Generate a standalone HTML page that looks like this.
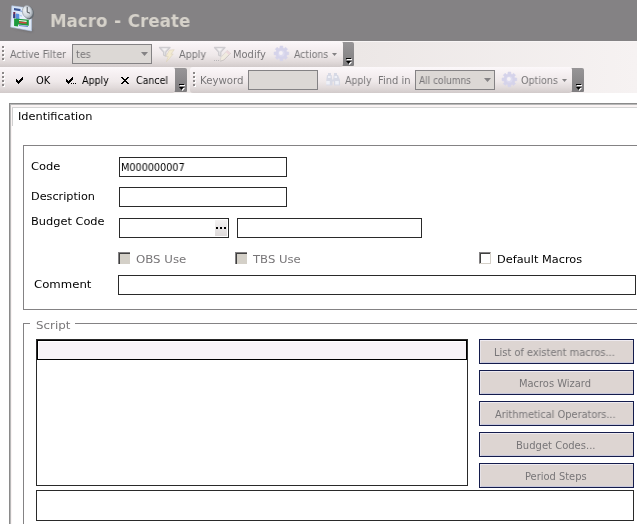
<!DOCTYPE html>
<html><head><meta charset="utf-8">
<style>
html,body{margin:0;padding:0;}
body{width:637px;height:524px;overflow:hidden;background:#fff;position:relative;font-family:"DejaVu Sans","Liberation Sans",sans-serif;font-size:11px;color:#000;}
.abs{position:absolute;}
#hdr{left:0;top:0;width:637px;height:41px;background:#848284;}
.dock{left:0;width:637px;height:26px;background:linear-gradient(to right,#ece7e6 0,#ece7e6 56%,#f6f2f2 100%);}
.tbg{background:linear-gradient(#fcf8fa 0,#f6f0f2 25%,#efe9ea 55%,#e1dada 80%,#d1caca 100%);height:26px;border-radius:0 3px 3px 0;}
.hnd{width:13px;height:24px;border-radius:0 2px 1px 0;background:linear-gradient(#979597,#8b898b 50%,#7f7d7f);}
.inp{border:1px solid #2a2a2a;background:#fff;box-sizing:border-box;}
.cmb{border:1px solid #848284;background:#dcd8d5;box-sizing:border-box;height:20px;}
.btn{border:1px solid #141c4c;background:#ddd5d2;box-shadow:inset 0 1px 0 #eeeaf0,inset 1px 0 0 #e6e2e6,inset 0 -1px 0 #c8c8dc;box-sizing:border-box;left:479px;width:155px;height:25px;}
.grip{width:3px;height:15px;}
.grip i{position:absolute;left:0;width:2px;height:2px;background:#8c8888;box-shadow:1px 1px 0 #fff;}
.chk{width:12px;height:12px;box-sizing:border-box;border-top:1px solid #848284;border-left:1px solid #848284;background:#d4d0c8;}
.chk:after{content:"";position:absolute;left:0;top:0;width:11px;height:11px;box-sizing:border-box;border-top:1px solid #404040;border-left:1px solid #404040;}
.chkw{background:#fff;border-right:1px solid #d4d0c8;border-bottom:1px solid #d4d0c8;}
.chkw:after{width:10px;height:10px;}

.t{position:absolute;will-change:transform;white-space:nowrap;line-height:14px;font-size:11px;transform-origin:0 0;}
.tt{font-family:"DejaVu Sans Condensed","Liberation Sans",sans-serif;}
.lbl{font-family:"DejaVu Sans","Liberation Sans",sans-serif;}
.ttl{font-family:"DejaVu Sans","Liberation Sans",sans-serif;font-weight:bold;font-size:17.7px;line-height:22px;word-spacing:1px;}

</style></head><body>
<div id="hdr" class="abs"></div>

<!-- header icon -->
<svg class="abs" style="left:0;top:0" width="48" height="41" viewBox="0 0 48 41">
  <defs>
    <filter id="bl" x="-20%" y="-20%" width="140%" height="140%"><feGaussianBlur stdDeviation=".5"/></filter>
    <filter id="bl2" x="-30%" y="-30%" width="160%" height="160%"><feGaussianBlur stdDeviation=".9"/></filter>
    <linearGradient id="pg" x1="0" y1="0" x2="1" y2="1"><stop offset="0" stop-color="#cfe0f6"/><stop offset=".55" stop-color="#eaf1fb"/><stop offset="1" stop-color="#d6e2f4"/></linearGradient>
    <radialGradient id="ck" cx=".38" cy=".35" r=".75"><stop offset="0" stop-color="#f2f5f8"/><stop offset=".6" stop-color="#cfd5dc"/><stop offset="1" stop-color="#9aa2aa"/></radialGradient>
  </defs>
  <path d="M13 28.500l18.500 3.500 2-2-2.500-1z" fill="#5a585c" opacity=".6" filter="url(#bl2)"/>
  <g filter="url(#bl)">
    <path d="M11.800 5.800l13 1.800 6.700 6v17.400l-20.800-3.900z" fill="url(#pg)" stroke="#b4c6e2" stroke-width=".6"/>
    <path d="M14 8l6.500.900v2.300l-6.500-.900z" fill="#3a5796"/>
    <path d="M20.500 10.500l2.500.400v1.200l-2.500-.400z" fill="#7fa4dc"/>
    <path d="M13.300 12h2v6h-2z" fill="#6e2c50"/>
    <path d="M13.300 14.200h2v4h-2z" fill="#2c4490"/>
    <path d="M16 13.500l3.200.400.200 5h-3.400z" fill="#5a90e0"/>
    <path d="M19.300 15l2.700.400v1l-2.700-.400z" fill="#a8c6f0"/>
    <path d="M14.100 18.400l4 .400 10.700 1v6l-10.700-1.200v2l-4-.600z" fill="#1e9a3c"/>
    <path d="M19 19.900l7.600.800v1.200l-7.600-.800z" fill="#f6f6f6"/>
    <path d="M19 21.500l7.600.800v1.500l-7.600-.800z" fill="#d4463e"/>
    <path d="M19 25l9 1.100v1l-9-1.100z" fill="#6a86d0"/>
  </g>
  <g filter="url(#bl)">
    <ellipse cx="28.700" cy="12.700" rx="5.200" ry="6.800" fill="#666c72" transform="rotate(-14 28.700 12.700)"/>
    <ellipse cx="27.300" cy="11.800" rx="4.900" ry="6.200" fill="url(#ck)" stroke="#a4acb4" stroke-width=".8" transform="rotate(-14 27.300 11.800)"/>
    <path d="M27.200 6.800v5.400l2.800 1" fill="none" stroke="#40464c" stroke-width=".9"/>
  </g>
</svg>

<!-- toolbar row 1 -->
<div class="abs dock" style="top:41px;border-top:1px solid #f8f5f5;box-sizing:border-box"></div>
<div class="abs hnd" style="left:341px;top:42px"></div>
<div class="abs tbg" style="left:0;top:41px;width:343px"></div>
<div class="abs grip" style="left:2px;top:46px"><i style="top:0"></i><i style="top:4px"></i><i style="top:8px"></i><i style="top:12px"></i></div>
<div class="abs cmb" style="left:72px;top:44px;width:80px"></div>

<!-- toolbar row 2 -->
<div class="abs dock" style="top:67px"></div>
<div class="abs hnd" style="left:174px;top:68px"></div>
<div class="abs tbg" style="left:0;top:67px;width:175px"></div>
<div class="abs hnd" style="left:571px;top:68px"></div>
<div class="abs tbg" style="left:190px;top:67px;width:382px;border-radius:3px"></div>
<div class="abs grip" style="left:2px;top:72px"><i style="top:0"></i><i style="top:4px"></i><i style="top:8px"></i><i style="top:12px"></i></div>
<div class="abs grip" style="left:193px;top:72px"><i style="top:0"></i><i style="top:4px"></i><i style="top:8px"></i><i style="top:12px"></i></div>
<div class="abs cmb" style="left:248px;top:70px;width:70px"></div>
<div class="abs cmb" style="left:415px;top:70px;width:80px"></div>

<!-- icons layer -->
<svg class="abs" style="left:0;top:0" width="637" height="94" viewBox="0 0 637 94">
  <!-- toolbar icons -->
  <g opacity=".9">
  <path d="M159.5 47.5h10.500l-4.200 4.600v4l-2.200-1v-3z" fill="#e6e4e6" stroke="#cbc9cd" stroke-width="1.300" stroke-linejoin="round"/><path d="M162.2 48.4h5l-2.500 2.600z" fill="#f6f4f5"/>
  <path d="M169.300 50.200l4.900-.500-3.300 4.500 2.300-.200-6.900 8 2-5.700-2.400.300z" fill="#f4ebcf" stroke="#ddd3bb" stroke-width=".7" stroke-linejoin="round"/>
  <path d="M214.5 47.5h10.500l-4.200 4.600v4l-2.200-1v-3z" fill="#e6e4e6" stroke="#cbc9cd" stroke-width="1.300" stroke-linejoin="round"/><path d="M217.2 48.4h5l-2.500 2.600z" fill="#f6f4f5"/>
  <path d="M227.200 50.400l3.400 2.900-6.800 6.800-3.700 1.100.800-3.900z" fill="#f1ecdf" stroke="#d6cecc" stroke-width=".7" stroke-linejoin="round"/>
  <path d="M230.600 53.300l-6.800 6.800-3.700 1.100" fill="none" stroke="#c4bebe" stroke-width=".8"/>
  <path d="M227.200 50.400l3.400 2.900-1.600 1.600-3.400-2.900z" fill="#ecd6da"/>
  <path d="M214 60h1v1h-1zM216 60h1v1h-1zM218 60h1v1h-1z" fill="#b4b2b4"/>
  </g>
  <path d="M279.90 47.90L279.99 46.03L282.81 46.03L282.90 47.90L284.22 48.45L285.62 47.20L287.60 49.18L286.35 50.58L286.90 51.90L288.77 51.99L288.77 54.81L286.90 54.90L286.35 56.22L287.60 57.62L285.62 59.60L284.22 58.35L282.90 58.90L282.81 60.77L279.99 60.77L279.90 58.90L278.58 58.35L277.18 59.60L275.20 57.62L276.45 56.22L275.90 54.90L274.03 54.81L274.03 51.99L275.90 51.90L276.45 50.58L275.20 49.18L277.18 47.20L278.58 48.45z" fill="#d5d3ea" stroke="#d5d3ea" stroke-width=".5" stroke-linejoin="round"/><circle cx="281.4" cy="53.4" r="3.200" fill="#dddbef"/><circle cx="280.9" cy="53.0" r="1.9" fill="#f5f1f5"/>
  <path d="M507.90 73.90L507.99 72.03L510.81 72.03L510.90 73.90L512.22 74.45L513.62 73.20L515.60 75.18L514.35 76.58L514.90 77.90L516.77 77.99L516.77 80.81L514.90 80.90L514.35 82.22L515.60 83.62L513.62 85.60L512.22 84.35L510.90 84.90L510.81 86.77L507.99 86.77L507.90 84.90L506.58 84.35L505.18 85.60L503.20 83.62L504.45 82.22L503.90 80.90L502.03 80.81L502.03 77.99L503.90 77.90L504.45 76.58L503.20 75.18L505.18 73.20L506.58 74.45z" fill="#d5d3ea" stroke="#d5d3ea" stroke-width=".5" stroke-linejoin="round"/><circle cx="509.4" cy="79.4" r="3.200" fill="#dddbef"/><circle cx="508.9" cy="79.0" r="1.9" fill="#f5f1f5"/>
  <g fill="#d7d9e5"><path d="M328 73h3v2h-3zM334 73h3v2h-3zM327 75h4.600l.600 4.500h1l.600-4.500h4.200l2 5v5.500h-6v-4h-1.500v4h-6.200v-5.500z"/></g>
  <path d="M326.200 81h3.600v3.600h-3.600zM335.200 81h3.600v3.600h-3.600zM328 76h2.500v2h-2.500zM334.500 76h2.500v2h-2.500z" fill="#eef0f7"/>
  <!-- combo arrows -->
  <path d="M141 52h7l-3.500 4z" fill="#848284"/>
  <path d="M484 78h7l-3.500 4z" fill="#848284"/>
  <path d="M332 53h5l-2.500 3z" fill="#848284"/>
  <path d="M562 79h5l-2.500 3z" fill="#848284"/>
  <!-- overflow handle glyphs -->
  <g><path d="M347 59h5v1h-5zM347 62h5l-2.500 3z" fill="#fff"/><path d="M346 58h5v1h-5zM346 61h5l-2.500 3z" fill="#000"/></g>
  <g transform="translate(-167,26)"><path d="M347 59h5v1h-5zM347 62h5l-2.500 3z" fill="#fff"/><path d="M346 58h5v1h-5zM346 61h5l-2.500 3z" fill="#000"/></g>
  <g transform="translate(230,26)"><path d="M347 59h5v1h-5zM347 62h5l-2.500 3z" fill="#fff"/><path d="M346 58h5v1h-5zM346 61h5l-2.500 3z" fill="#000"/></g>
  <!-- check marks / x -->
  <path d="M16 79h1v3h-1zM17 80h1v3h-1zM18 81h1v3h-1zM19 80h1v3h-1zM20 79h1v3h-1zM21 78h1v3h-1zM22 77h1v3h-1z" fill="#000"/>
  <path d="M66 79h1v3h-1zM67 80h1v3h-1zM68 81h1v3h-1zM69 80h1v3h-1zM70 79h1v3h-1zM71 78h1v3h-1zM72 77h1v3h-1zM71 83h1v1h-1zM73 83h1v1h-1zM75 83h1v1h-1z" fill="#000"/>
  <path d="M121 77h2v1h-2zM127 77h2v1h-2zM122 78h2v1h-2zM126 78h2v1h-2zM123 79h4v1h-4zM124 80h2v1h-2zM123 81h4v1h-4zM122 82h2v1h-2zM126 82h2v1h-2zM121 83h2v1h-2zM127 83h2v1h-2z" fill="#000"/>
</svg>

<!-- outer panel -->
<div class="abs" style="left:9px;top:103px;width:640px;height:440px;border-left:1px solid #8a8a8a;border-top:1px solid #8a8a8a;"></div>
<div class="abs" style="left:10px;top:104px;width:640px;height:440px;border-left:1px solid #b8b8b8;border-top:1px solid #b8b8b8;"></div>
<div class="abs" style="left:11px;top:105px;width:640px;height:2px;background:#faf4f4"></div>
<div class="abs" style="left:11px;top:105px;width:1px;height:420px;background:#faf4f4"></div>
<div class="abs" style="left:12px;top:107px;width:640px;height:18px;border-left:1px solid #d0d0d0;border-top:1px solid #d4d4d4;"></div>

<!-- identification fieldset -->
<div class="abs" style="left:23px;top:145px;width:640px;height:165px;border:1px solid #848284;box-sizing:border-box"></div>
<div class="abs inp" style="left:119px;top:157px;width:168px;height:20px"></div>
<div class="abs inp" style="left:119px;top:187px;width:168px;height:20px"></div>
<div class="abs inp" style="left:119px;top:218px;width:110px;height:20px"></div>
<div class="abs" style="left:215px;top:220px;width:12px;height:16px;background:linear-gradient(#f4f2f2,#dedada)"></div>
<div class="abs" style="left:216px;top:227px;width:2px;height:2px;background:#000;box-shadow:4px 0 0 #000,8px 0 0 #000"></div>
<div class="abs inp" style="left:237px;top:218px;width:185px;height:20px"></div>
<div class="abs chk" style="left:118px;top:252px"></div>
<div class="abs chk" style="left:235px;top:252px"></div>
<div class="abs chk chkw" style="left:479px;top:252px"></div>
<div class="abs inp" style="left:118px;top:275px;width:518px;height:20px"></div>

<!-- script fieldset -->
<div class="abs" style="left:23px;top:323px;width:640px;height:240px;border:1px solid #848284;box-sizing:border-box"></div>
<div class="abs" style="left:30px;top:318px;background:#fff;width:45px;height:12px"></div>
<div class="abs inp" style="left:36px;top:339px;width:432px;height:147px"></div>
<div class="abs" style="left:37px;top:340px;width:430px;height:20px;background:#f7f3f7;border:1px solid #000;box-sizing:border-box;box-shadow:inset 1px 1px 0 #fff"></div>
<div class="abs inp" style="left:36px;top:490px;width:598px;height:31px"></div>
<div class="abs btn" style="top:339px"></div>
<div class="abs btn" style="top:370px"></div>
<div class="abs btn" style="top:401px"></div>
<div class="abs btn" style="top:432px"></div>
<div class="abs btn" style="top:463px"></div>

<div class="t ttl" style="left:50.01px;top:9.7px;color:#d6d2ca;transform:scaleX(0.9432)">Macro - Create</div>
<div class="t tt" style="left:10.00px;top:48px;color:#787678;transform:scaleX(0.9655)">Active Filter</div>
<div class="t tt" style="left:76.00px;top:48px;color:#787678;transform:scaleX(0.9667)">tes</div>
<div class="t tt" style="left:179.00px;top:48px;color:#787678;transform:scaleX(0.9741)">Apply</div>
<div class="t tt" style="left:233.01px;top:48px;color:#787678;transform:scaleX(0.9935)">Modify</div>
<div class="t tt" style="left:294.00px;top:48px;color:#787678;transform:scaleX(0.9444)">Actions</div>
<div class="t tt" style="left:36.00px;top:74px;color:#000;transform:scaleX(1.0000)">OK</div>
<div class="t tt" style="left:82.00px;top:74px;color:#000;transform:scaleX(0.9630)">Apply</div>
<div class="t tt" style="left:136.05px;top:74px;color:#000;transform:scaleX(0.9531)">Cancel</div>
<div class="t tt" style="left:199.67px;top:74px;color:#787678;transform:scaleX(1.0325)">Keyword</div>
<div class="t tt" style="left:345.30px;top:74px;color:#787678;transform:scaleX(0.9519)">Apply</div>
<div class="t tt" style="left:377.99px;top:74px;color:#787678;transform:scaleX(1.0067)">Find in</div>
<div class="t tt" style="left:419.00px;top:74px;color:#787678;transform:scaleX(0.9107)">All columns</div>
<div class="t tt" style="left:521.04px;top:74px;color:#787678;transform:scaleX(0.9649)">Options</div>
<div class="t lbl" style="left:17.97px;top:110px;color:#000;transform:scaleX(1.0314)">Identification</div>
<div class="t lbl" style="left:30.96px;top:160px;color:#000;transform:scaleX(1.0444)">Code</div>
<div class="t tt" style="left:121.02px;top:161px;color:#000;transform:scaleX(0.9762)">M000000007</div>
<div class="t lbl" style="left:30.98px;top:190px;color:#000;transform:scaleX(1.0213)">Description</div>
<div class="t lbl" style="left:30.97px;top:215px;color:#000;transform:scaleX(1.0329)">Budget Code</div>
<div class="t lbl" style="left:135.93px;top:253px;color:#787678;transform:scaleX(1.0689)">OBS Use</div>
<div class="t lbl" style="left:253.40px;top:253px;color:#787678;transform:scaleX(1.0591)">TBS Use</div>
<div class="t lbl" style="left:496.67px;top:253px;color:#000;transform:scaleX(1.0296)">Default Macros</div>
<div class="t lbl" style="left:33.53px;top:278px;color:#000;transform:scaleX(1.0654)">Comment</div>
<div class="t lbl" style="left:35.52px;top:319px;color:#787678;transform:scaleX(1.0767)">Script</div>
<div class="t tt" style="left:494.41px;top:346px;color:#787678;transform:scaleX(0.9942)">List of existent macros...</div>
<div class="t tt" style="left:519.30px;top:377px;color:#787678;transform:scaleX(0.9957)">Macros Wizard</div>
<div class="t tt" style="left:495.40px;top:408px;color:#787678;transform:scaleX(0.9860)">Arithmetical Operators...</div>
<div class="t tt" style="left:515.69px;top:439px;color:#787678;transform:scaleX(1.0104)">Budget Codes...</div>
<div class="t tt" style="left:524.60px;top:470px;color:#787678;transform:scaleX(0.9967)">Period Steps</div>
</body></html>
